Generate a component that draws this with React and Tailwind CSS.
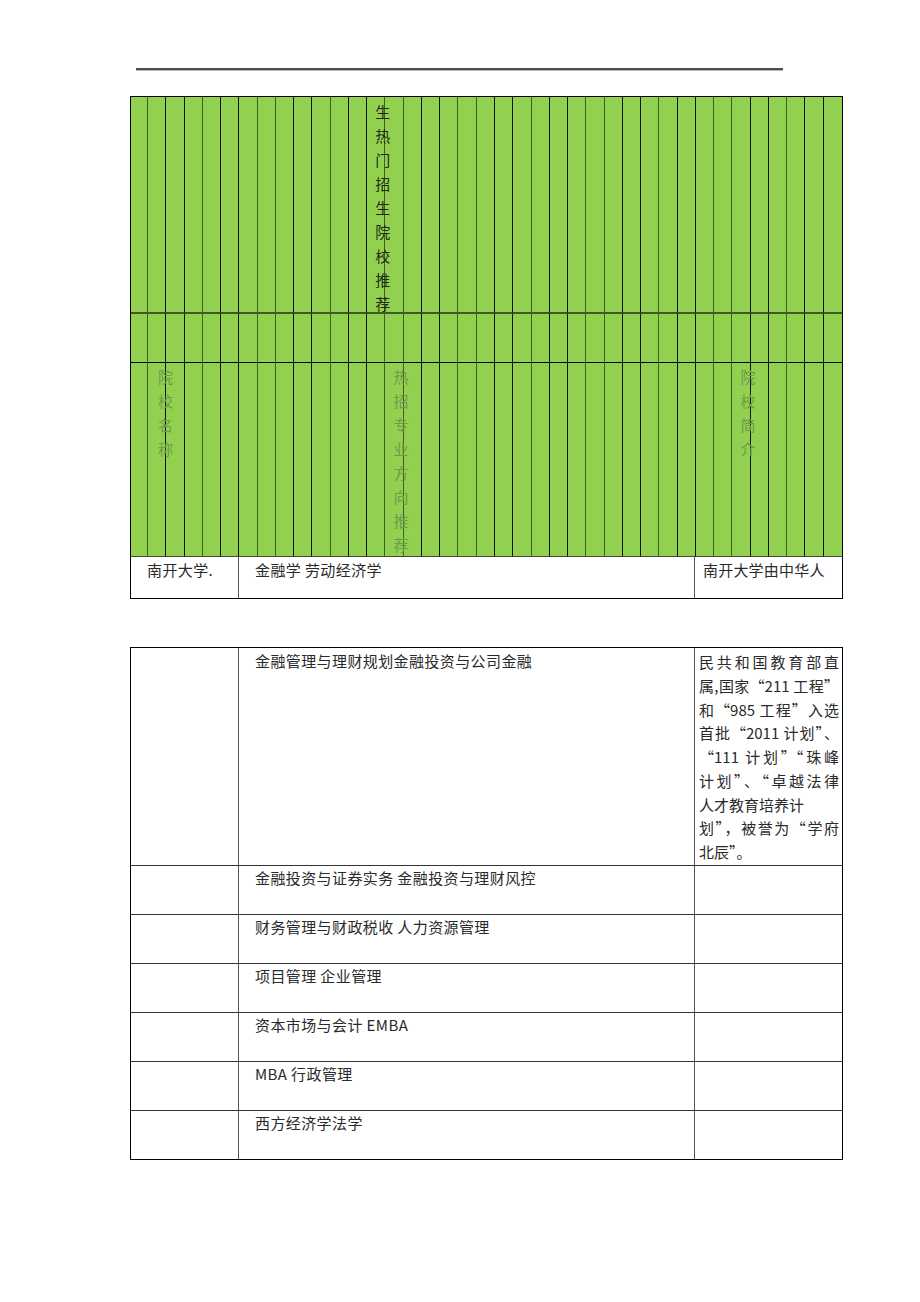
import React from "react";

const COLS = 39;

function lineClass(c) {
  const p = 147.7 + c * 18.28;
  const f = p - Math.floor(p);
  return f > 0.3 && f < 0.75 ? "border-r-[#3f5e24]" : "border-r-[#0d140a]";
}

function VText({ text, className }) {
  return (
    <div className={`relative z-10 ${className}`}>
      {text.split("").map((ch, i) => (
        <div key={i} className="h-[24px] leading-[24px]">
          {ch}
        </div>
      ))}
    </div>
  );
}

function GreenCell({ r, c }) {
  const last = c === COLS - 1;
  const rb = r === 0 ? "border-b-2 border-b-[#3f5a26]" : r === 1 ? "border-b border-b-black" : "border-b border-b-[#3d4f30]";
  const vb = last ? "" : `border-r ${lineClass(c)}`;
  let content = null;
  if (r === 0 && c === 13)
    content = <VText text="生热门招生院校推荐" className="pl-[8px] pt-[3px] text-[#1e2a16] whitespace-nowrap" />;
  if (r === 2 && c === 1)
    content = <VText text="院校名称" className="pl-[10px] pt-[2px] text-[#6f9a4a] whitespace-nowrap" />;
  if (r === 2 && c === 14)
    content = <VText text="热招专业方向推荐" className="pl-[8px] pt-[2px] text-[#6f9a4a] whitespace-nowrap" />;
  if (r === 2 && c === 33)
    content = <VText text="院校简介" className="pl-[8px] pt-[2px] text-[#6f9a4a] whitespace-nowrap" />;
  return <div className={`bg-[#92d050] ${vb} ${rb} overflow-visible min-w-0`}>{content}</div>;
}

const col3Lines = [
  ["民共和国教育部直", true],
  ["属,国家“211 工程”", true],
  ["和“985 工程”入选", true],
  ["首批“2011 计划”、", true],
  ["“111 计划”“珠峰", true],
  ["计划”、“卓越法律", true],
  ["人才教育培养计", false],
  ["划”，被誉为“学府", true],
  ["北辰”。", false],
];

const rows2 = [
  "金融投资与证券实务 金融投资与理财风控",
  "财务管理与财政税收 人力资源管理",
  "项目管理 企业管理",
  "资本市场与会计 EMBA",
  "MBA 行政管理",
  "西方经济学法学",
];

export default function App() {
  const cells = [];
  for (let r = 0; r < 3; r++) for (let c = 0; c < COLS; c++) cells.push(<GreenCell key={`${r}-${c}`} r={r} c={c} />);

  return (
    <div className="w-[920px] h-[1302px] bg-white font-['Noto_Sans_CJK_SC',sans-serif] text-[15px] tracking-[0.4px] text-[#2a2a2a] overflow-hidden">
      <div className="pt-[68px] pl-[136px]">
        <div className="w-[647px] h-[2px] bg-[#4e4e4e]" />
        <div className="w-[647px] h-px bg-[#b5b5b5]" />
      </div>

      <div className="ml-[130px] mt-[25px] w-[713px] border border-black">
        <div className="grid grid-cols-[17px_repeat(38,minmax(0,1fr))] grid-rows-[217px_49px_194px]">{cells}</div>
        <div className="grid grid-cols-[108px_456px_1fr] h-[41px] leading-[24px]">
          <div className="border-r border-r-[#555] pl-[16px] pt-[1px]">南开大学.</div>
          <div className="border-r border-r-[#555] pl-[16px] pt-[1px]">金融学 劳动经济学</div>
          <div className="pl-[8px] pt-[1px] tracking-[0.2px] whitespace-nowrap">南开大学由中华人</div>
        </div>
      </div>

      <div className="ml-[130px] mt-[48px] w-[713px] border border-black">
        <div className="grid grid-cols-[108px_456px_1fr] h-[218px] border-b border-b-[#333]">
          <div className="border-r border-r-[#555]" />
          <div className="border-r border-r-[#555] pl-[16px] pt-[1px] leading-[24px]">金融管理与理财规划金融投资与公司金融</div>
          <div className="pl-[4px] pr-[3px] pt-[2px] leading-[23.75px] tracking-normal">
            {col3Lines.map(([t, j], i) => (
              <div key={i} className={j ? "text-justify [text-align-last:justify] whitespace-nowrap" : "whitespace-nowrap"}>
                {t}
              </div>
            ))}
          </div>
        </div>
        {rows2.map((t, i) => (
          <div
            key={i}
            className={`grid grid-cols-[108px_456px_1fr] leading-[24px] ${i === rows2.length - 1 ? "h-[48px]" : "h-[49px] border-b border-b-[#333]"}`}
          >
            <div className="border-r border-r-[#555]" />
            <div className="border-r border-r-[#555] pl-[16px]">{t}</div>
            <div />
          </div>
        ))}
      </div>
    </div>
  );
}
